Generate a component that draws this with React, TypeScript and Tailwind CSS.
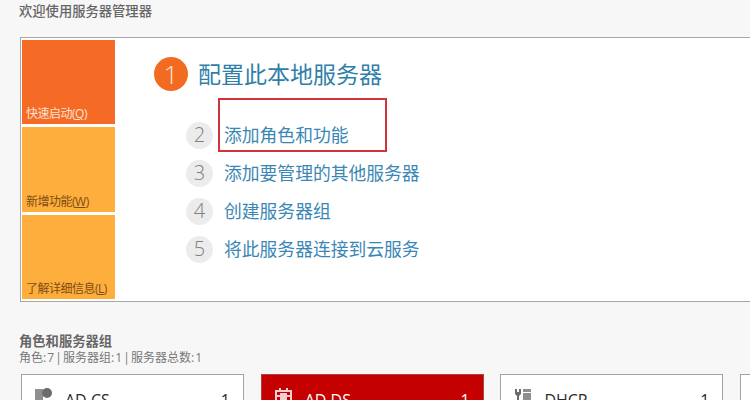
const font = "font-['Open_Sans','Noto_Sans_CJK_SC',sans-serif]";

const steps = [
  { n: '2', label: '添加角色和功能' },
  { n: '3', label: '添加要管理的其他服务器' },
  { n: '4', label: '创建服务器组' },
  { n: '5', label: '将此服务器连接到云服务' },
];

function Tile({ label, hot, height }: { label: React.ReactNode; hot?: boolean; height: string }) {
  return (
    <div
      className={`flex items-end pb-[2px] pl-[4px] text-[12px] leading-[16px] tracking-[-0.5px] ${height} ${
        hot ? 'bg-[#f56a24] text-[#fbe3d3]' : 'bg-[#fdae3c] text-[#7d4c14]'
      }`}
    >
      {label}
    </div>
  );
}

function RoleIcon({ kind }: { kind: 'cs' | 'ds' | 'dhcp' }) {
  if (kind === 'cs') {
    return (
      <svg width="18" height="18" viewBox="0 0 18 18" fill="#6b6b6b">
        <rect x="0" y="1" width="8" height="12" fill="#8f8f8f" />
        <circle cx="12" cy="5" r="5" />
      </svg>
    );
  }
  if (kind === 'ds') {
    return (
      <svg width="18" height="18" viewBox="0 0 18 18" fill="none" stroke="#f6d0d0" strokeWidth="2">
        <rect x="1" y="3" width="15" height="14" />
        <path d="M5 0v3M12 0v3M1 8h15" />
        <rect x="5" y="5" width="7" height="9" fill="#f6d0d0" stroke="none" />
      </svg>
    );
  }
  return (
    <svg width="18" height="18" viewBox="0 0 18 18" fill="#6b6b6b">
      <path d="M1 1h2v3h2V1h2v5L5 8v5H3V8L1 6z" />
      <rect x="9" y="1" width="8" height="3" fill="#8f8f8f" />
      <rect x="9" y="5" width="8" height="10" fill="#8f8f8f" />
    </svg>
  );
}

function RoleCard({ name, kind, active }: { name: string; kind: 'cs' | 'ds' | 'dhcp'; active?: boolean }) {
  return (
    <div
      className={`flex h-[60px] w-[223px] shrink-0 items-start border pt-[13px] pr-[13px] pl-[13px] ${
        active ? 'border-[#a94442] bg-[#c40000] text-white' : 'border-[#a3a3a3] bg-white text-[#2b2b2b]'
      }`}
    >
      <RoleIcon kind={kind} />
      <span className="ml-[12px] text-[16px] leading-[24px]">{name}</span>
      <span className="ml-auto text-[16px] leading-[24px]">1</span>
    </div>
  );
}

export default function App() {
  return (
    <div className={`h-[400px] w-[750px] overflow-hidden bg-[#f7f7f7] pl-[19px] ${font}`}>
      <h1 className="pt-[1px] text-[13.3px] leading-[20px] font-medium text-[#666666]">欢迎使用服务器管理器</h1>

      {/* Quick start panel */}
      <div className="mt-[16px] ml-[1px] flex h-[265px] w-[760px] border border-[#a8a8a8] bg-white pt-[2px] pl-[1px]">
        <div className="flex w-[93px] shrink-0 flex-col gap-[3px]">
          <Tile hot height="h-[84px]" label={<span>快速启动(<u>Q</u>)</span>} />
          <Tile height="h-[85px]" label={<span>新增功能(<u>W</u>)</span>} />
          <Tile height="h-[84px]" label={<span>了解详细信息(<u>L</u>)</span>} />
        </div>

        <div className="relative flex-1 pt-[17px] pl-[39px]">
          <div className="flex items-center">
            <div className="flex h-[34px] w-[34px] items-center justify-center rounded-full bg-[#f26b21] text-[26px] font-light text-[#fde3d2]">
              1
            </div>
            <span className="ml-[10px] text-[23px] leading-[34px] text-[#2f7fa8]">配置此本地服务器</span>
          </div>

          <div className="mt-[30px] ml-[32px] flex flex-col gap-[10px]">
            {steps.map(step => (
              <div key={step.n} className="flex h-[28px] items-center">
                <div className="flex h-[27px] w-[27px] items-center justify-center rounded-full bg-[#ececec] text-[20px] font-light text-[#808080]">
                  {step.n}
                </div>
                <span className="ml-[11px] text-[17.8px] leading-[28px] text-[#3a87b5]">{step.label}</span>
              </div>
            ))}
          </div>

          {/* Red annotation box */}
          <div className="absolute top-[58px] left-[103px] h-[54px] w-[169px] border-[2px] border-[#d2323a]" />
        </div>
      </div>

      {/* Roles and server groups */}
      <h2 className="mt-[30px] text-[13.3px] leading-[18px] font-semibold text-[#666666]">角色和服务器组</h2>
      <p className="text-[12px] leading-[15px] text-[#777777] [word-spacing:-2px]">角色: 7 | 服务器组: 1 | 服务器总数: 1</p>

      <div className="mt-[9px] ml-[2px] flex gap-[16.7px]">
        <RoleCard name="AD CS" kind="cs" />
        <RoleCard name="AD DS" kind="ds" active />
        <RoleCard name="DHCP" kind="dhcp" />
        <div className="h-[60px] w-[223px] shrink-0 border border-[#a3a3a3] bg-white" />
      </div>
    </div>
  );
}
